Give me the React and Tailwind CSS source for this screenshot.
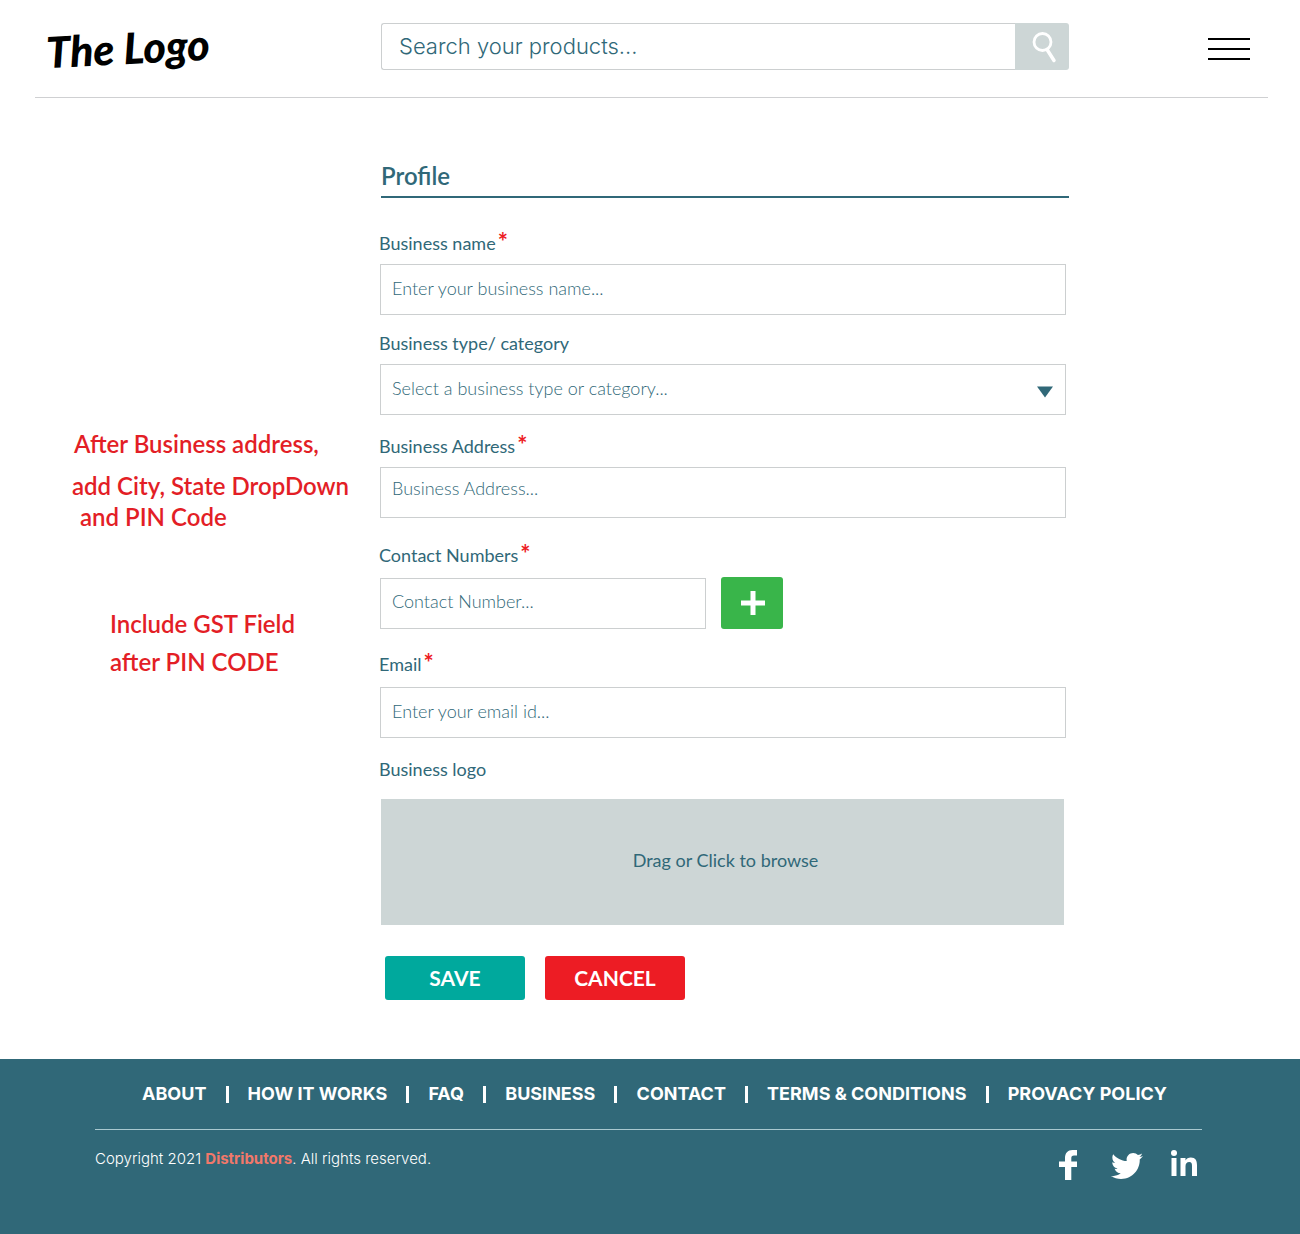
import { FaTwitter } from "react-icons/fa";

const PAGE_GRID = "grid grid-cols-[380fr_688fr_232fr]";
const INPUT =
  "block h-[51px] w-full border border-[#cccfd0] bg-white px-[11px] font-light text-lg text-[#306878] placeholder:text-[#306878] placeholder:opacity-100 outline-none focus:border-[#306878]";

function Label({ htmlFor, required, children }) {
  return (
    <label htmlFor={htmlFor} className="-ml-px flex h-6 gap-0.5 text-lg leading-[22px]">
      {children}
      {required && <span className="text-2xl leading-5 font-bold text-[#ed1c24]">*</span>}
    </label>
  );
}

function Header() {
  return (
    <header>
      <div className={`${PAGE_GRID} h-[97px]`}>
        <a
          href="#home"
          className="mt-[18px] ml-[46px] -rotate-3 self-start justify-self-start font-['Lato'] text-[43px] leading-[60px] font-black whitespace-nowrap text-black italic"
        >
          The Logo
        </a>
        <form className="mt-[23px] -mr-px ml-px flex h-[47px]" role="search">
          <input
            type="search"
            aria-label="Search your products"
            placeholder="Search your products..."
            className="min-w-0 flex-1 rounded-l-[3px] border border-r-0 border-[#cccfd0] px-[17px] font-['Inter'] text-[22px] font-light text-[#306878] outline-none placeholder:text-[#306878] placeholder:opacity-100"
          />
          <button
            type="button"
            aria-label="Search"
            className="flex w-[54px] items-center justify-center rounded-r-[3px] bg-[#cdd6d6]"
          >
            <svg width="26" height="32" viewBox="0 0 26 32" fill="none" stroke="#fff" className="ml-1">
              <circle cx="11.500" cy="11" r="8.500" strokeWidth="2.800" />
              <path d="M16 18.500 23 29.500" strokeWidth="3.500" strokeLinecap="round" />
            </svg>
          </button>
        </form>
        <button
          type="button"
          aria-label="Menu"
          className="mt-[38px] mr-[50px] flex h-[22px] w-[42px] flex-col justify-between self-start justify-self-end"
        >
          <span className="h-0.5 w-full bg-black" />
          <span className="h-0.5 w-full bg-black" />
          <span className="h-0.5 w-full bg-black" />
        </button>
      </div>
      <hr className="mr-8 ml-[35px] border-t border-[#cfd0d2]" />
    </header>
  );
}

function Notes() {
  return (
    <aside className="pt-[330px] pl-[72px] text-2xl leading-[31px] font-semibold whitespace-nowrap text-[#e31e26]">
      <p className="pl-0.5">After Business address,</p>
      <p className="mt-[11px]">add City, State DropDown</p>
      <p className="pl-2">and PIN Code</p>
      <div className="mt-[76px] pl-[38px]">
        <p>Include GST Field</p>
        <p className="mt-[7px]">after PIN CODE</p>
      </div>
    </aside>
  );
}

function ProfileForm() {
  return (
    <form className="pr-0.5">
      <h1 className="mt-[60px] -mr-[3px] ml-px border-b-2 border-[#306878] pb-0.5 text-2xl leading-9 font-semibold">
        Profile
      </h1>

      <div className="mt-[34px]">
        <Label htmlFor="name" required>Business name</Label>
        <input id="name" placeholder="Enter your business name..." className={`${INPUT} mt-2 pb-1`} />
      </div>

      <div className="mt-[17px]">
        <Label htmlFor="type">Business type/ category</Label>
        <div className="relative mt-2">
          <select id="type" defaultValue="" className={`${INPUT} appearance-none pb-1`}>
            <option value="">Select a business type or category...</option>
          </select>
          <svg
            width="16"
            height="12"
            viewBox="0 0 16 12"
            className="pointer-events-none absolute top-[22px] right-[13px]"
          >
            <path d="M0 0.500H16L8 11.500Z" fill="#306878" />
          </svg>
        </div>
      </div>

      <div className="mt-5">
        <Label htmlFor="address" required>Business Address</Label>
        <input id="address" placeholder="Business Address..." className={`${INPUT} mt-2 pb-2.5`} />
      </div>

      <div className="mt-[26px]">
        <Label htmlFor="contact" required>Contact Numbers</Label>
        <div className="mt-[10px] flex gap-[15px]">
          <div className="w-[326px]">
            <input id="contact" type="tel" placeholder="Contact Number..." className={`${INPUT} pb-1.5`} />
          </div>
          <button
            type="button"
            aria-label="Add contact number"
            className="-mt-px flex h-[52px] w-[62px] items-center justify-center rounded-[3px] bg-[#39b54a] pl-0.5"
          >
            <svg width="24" height="24" viewBox="0 0 24 24" fill="#fff">
              <path d="M9.500 0h5v9.500H24v5h-9.500V24h-5v-9.500H0v-5h9.500z" />
            </svg>
          </button>
        </div>
      </div>

      <div className="mt-6">
        <Label htmlFor="email" required>Email</Label>
        <input id="email" type="email" placeholder="Enter your email id..." className={`${INPUT} mt-[10px] pb-1`} />
      </div>

      <div className="mt-5">
        <Label htmlFor="logo">Business logo</Label>
        <label
          htmlFor="logo"
          className="mt-[17px] mr-0.5 ml-px flex h-[126px] cursor-pointer items-center justify-center bg-[#cdd6d6] pb-1 pl-1.5 text-lg"
        >
          Drag or Click to browse
          <input id="logo" type="file" className="sr-only" />
        </label>
      </div>

      <div className="mt-[31px] ml-[5px] flex gap-5 text-[21px] font-bold text-white">
        <button type="submit" className="h-11 w-[140px] rounded-[3px] bg-[#00a99d]">SAVE</button>
        <button type="reset" className="h-11 w-[140px] rounded-[3px] bg-[#ed1c24]">CANCEL</button>
      </div>
    </form>
  );
}

const LINKS = ["ABOUT", "HOW IT WORKS", "FAQ", "BUSINESS", "CONTACT", "TERMS & CONDITIONS", "PROVACY POLICY"];

function Footer() {
  return (
    <footer className="mt-[59px] grow bg-[#306878] pr-[98px] pl-[95px] font-['Inter'] text-white">
      <nav className="flex h-[71px] items-center justify-between border-b border-[#a9c9d0] pr-[35px] pl-[47px] text-lg font-bold whitespace-nowrap">
        {LINKS.map((text, i) => (
          <div key={text} className="contents">
            {i > 0 && <span className="h-[17px] w-[3px] bg-white" />}
            <a href={`#link-${i}`}>{text}</a>
          </div>
        ))}
      </nav>
      <div className="flex justify-between">
        <p className="mt-[17px] text-[15px] leading-6 font-light">
          Copyright 2021 <strong className="font-bold text-[#f2786a]">Distributors</strong>. All rights reserved.
        </p>
        <div className="mt-5 mr-[5px] flex h-[30px] items-start">
          <a href="#facebook" aria-label="Facebook">
            <svg width="18" height="30" viewBox="0 0 18 30" fill="#fff">
              <path d="M6 30V17H0v-5.500h6V8c0-5 2.800-8 7.500-8H18v5.500h-3c-2 0-2.700 1-2.700 2.700v3.300H18V17h-5.700v13z" />
            </svg>
          </a>
          <a href="#twitter" aria-label="Twitter" className="ml-[34px]"><FaTwitter size={32} /></a>
          <a href="#linkedin" aria-label="LinkedIn" className="ml-7">
            <svg width="26" height="26" viewBox="0 0 26 26" fill="#fff">
              <circle cx="3" cy="3" r="3" />
              <path d="M0.500 8h5v18h-5zM9.500 8h5v2.500c1-1.800 2.800-3 5.300-3 4.700 0 6.200 3 6.200 7.500v11h-5v-10c0-2.500-.5-4-2.700-4-2.600 0-3.800 1.800-3.800 4.300V26h-5z" />
            </svg>
          </a>
        </div>
      </div>
    </footer>
  );
}

export default function App() {
  return (
    <div className="flex min-h-screen flex-col bg-white font-['Lato',sans-serif] text-[#306878]">
      <Header />
      <main className={PAGE_GRID}>
        <Notes />
        <ProfileForm />
      </main>
      <Footer />
    </div>
  );
}
